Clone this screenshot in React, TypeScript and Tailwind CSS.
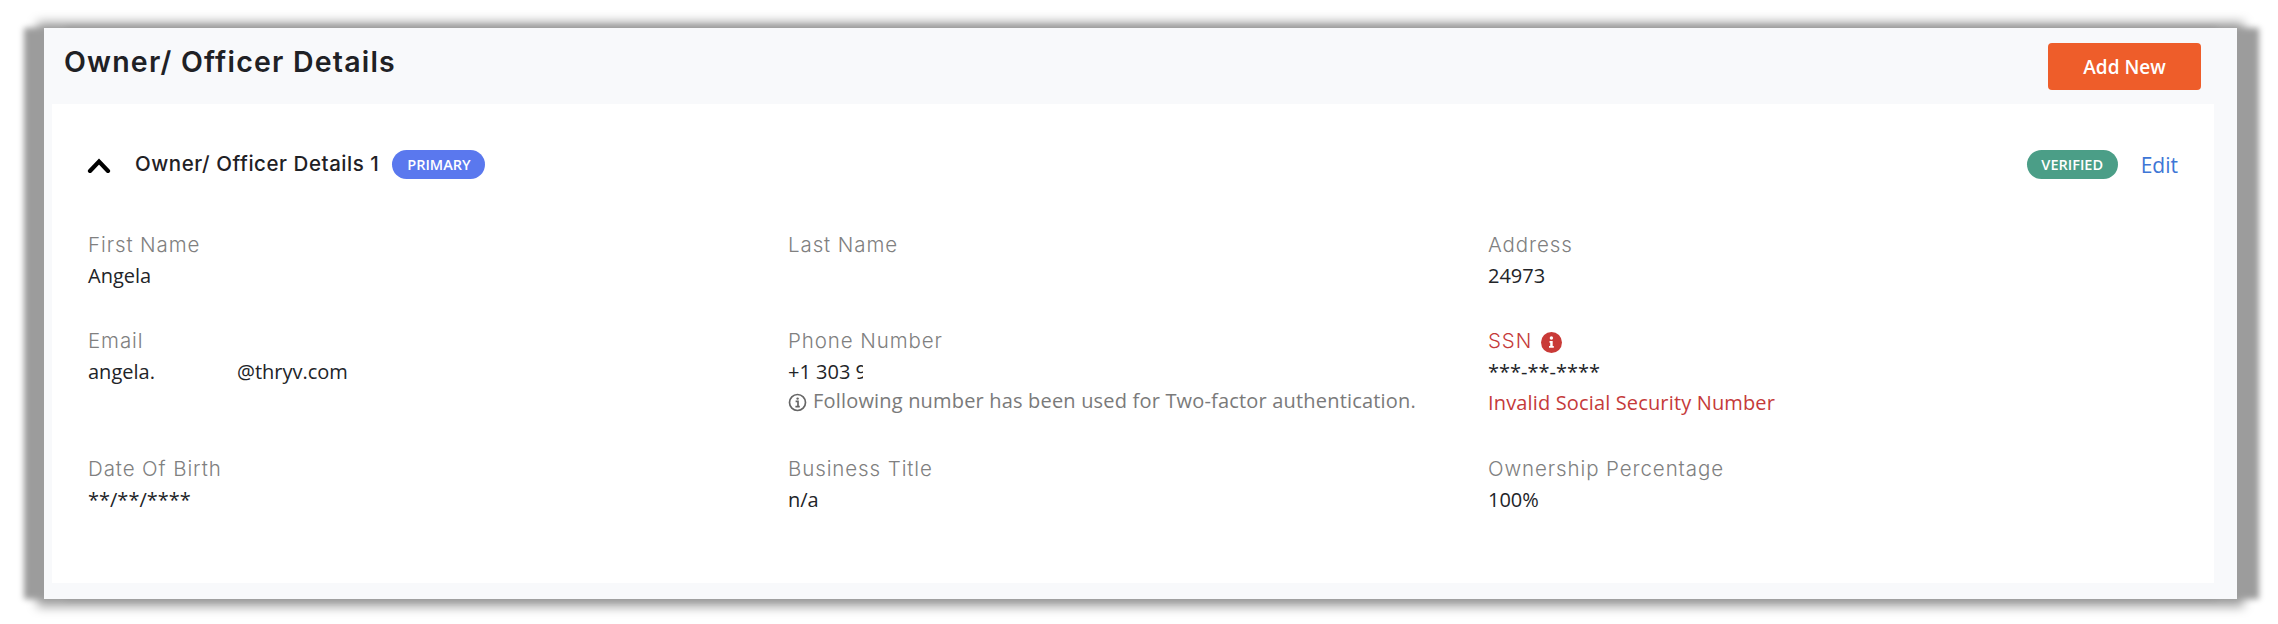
import React from 'react';

const headingFont = "font-['Inter','Noto_Sans',sans-serif]";
const bodyFont = "font-['Open_Sans',sans-serif]";

function Label({ children, red }: { children: React.ReactNode; red?: boolean }) {
  return (
    <div className={`${headingFont} text-[20.5px] leading-[28px] font-light tracking-[0.9px] ${red ? 'text-[#c53a3a]' : 'text-[#808080]'}`}>
      {children}
    </div>
  );
}

function Value({ children }: { children: React.ReactNode }) {
  return <div className={`${bodyFont} text-[20px] leading-[28px] mt-[3px] text-[#222428]`}>{children}</div>;
}

function Field({ label, value }: { label: string; value: string }) {
  return (
    <div>
      <Label>{label}</Label>
      <Value>{value}</Value>
    </div>
  );
}

export default function App() {
  return (
    <div className="w-[2278px] h-[624px] bg-white pt-[28px] pl-[44px] overflow-hidden">
      <div className="w-[2193px] h-[571px] bg-[#f8f9fb] flex flex-col shadow-[-20px_0_6px_#9c9c9c,22px_0_6px_#9c9c9c,0_1px_10px_7px_#a6a6a6]">
        <div className="h-[76px] flex items-start justify-between pl-[20px] pr-[36px]">
          <h1 className={`${headingFont} text-[28.5px] leading-[36px] mt-[16px] font-semibold tracking-[1.2px] text-[#1f2125]`}>
            Owner/ Officer Details
          </h1>
          <button className={`${bodyFont} w-[153px] h-[47px] mt-[15px] pt-[1px] rounded-[4px] bg-[#ee5d2a] text-white text-[19px] font-semibold`}>
            Add New
          </button>
        </div>

        <div className="ml-[8px] mr-[23px] h-[479px] bg-white pl-[36px] pr-[36px] pt-[46px]">
          <div className="flex items-center justify-between h-[29px]">
            <div className="flex items-center">
              <svg width="26" height="16" viewBox="0 0 26 16" className="ml-[-2px] mt-[1px]">
                <path d="M4 14 L13 4.5 L22 14" fill="none" stroke="#000" strokeWidth="4.2" strokeLinecap="round" strokeLinejoin="miter" />
              </svg>
              <span className={`${headingFont} ml-[23px] text-[20.5px] font-medium tracking-[0.55px] text-[#1f2125]`}>
                Owner/ Officer Details 1
              </span>
              <span className={`${bodyFont} ml-[13px] w-[93px] h-[29px] rounded-full bg-[#5a78ee] text-white text-[14.5px] font-semibold flex items-center justify-center`}>
                PRIMARY
              </span>
            </div>
            <div className="flex items-center">
              <span className={`${bodyFont} w-[91px] h-[29px] rounded-full bg-[#4b9e87] text-white text-[14.5px] font-semibold flex items-center justify-center`}>
                VERIFIED
              </span>
              <a className={`${bodyFont} ml-[23px] text-[21px] font-medium text-[#3e76d6] mt-[2px]`}>Edit</a>
            </div>
          </div>

          <div className="grid grid-cols-[700px_700px_1fr] mt-[52px]">
            <div className="h-[96px]"><Field label="First Name" value="Angela" /></div>
            <div><Label>Last Name</Label></div>
            <Field label="Address" value="24973" />

            <div className="h-[128px]">
              <Label>Email</Label>
              <Value>
                <span className="inline-block w-[149px]">angela.</span>@thryv.com
              </Value>
            </div>
            <div>
              <Label>Phone Number</Label>
              <Value>
                <span className="inline-block w-[75px] overflow-hidden whitespace-nowrap align-top">+1 303 9</span>
              </Value>
              <div className={`${bodyFont} flex items-center text-[20px] leading-[28px] text-[#7a7a7a] tracking-[0.18px] mt-[1px]`}>
                <svg width="19" height="19" viewBox="0 0 19 19" className="mr-[6px] mt-[2px]">
                  <circle cx="9.5" cy="9.5" r="8" fill="none" stroke="#666" strokeWidth="1.7" />
                  <path d="M7.6 8.4h2.4v5M7.4 13.6h4.4" fill="none" stroke="#666" strokeWidth="1.7" />
                  <circle cx="9.6" cy="5.6" r="1.2" fill="#666" />
                </svg>
                Following number has been used for Two-factor authentication.
              </div>
            </div>
            <div>
              <div className="flex items-center">
                <Label red>SSN</Label>
                <svg width="21" height="21" viewBox="0 0 21 21" className="ml-[9px] mt-[2px]">
                  <circle cx="10.5" cy="10.5" r="10.5" fill="#c93a37" />
                  <path d="M8.5 9h3.2v5h1.1v1.7H8v-1.7h1.2v-3.3h-.7z" fill="#fff" />
                  <circle cx="10.4" cy="6" r="1.7" fill="#fff" />
                </svg>
              </div>
              <Value>***-**-****</Value>
              <div className={`${bodyFont} text-[20px] leading-[28px] tracking-[0.15px] text-[#c53a3a] mt-[3px]`}>Invalid Social Security Number</div>
            </div>

            <Field label="Date Of Birth" value="**/**/****" />
            <Field label="Business Title" value="n/a" />
            <Field label="Ownership Percentage" value="100%" />
          </div>
        </div>
      </div>
    </div>
  );
}
